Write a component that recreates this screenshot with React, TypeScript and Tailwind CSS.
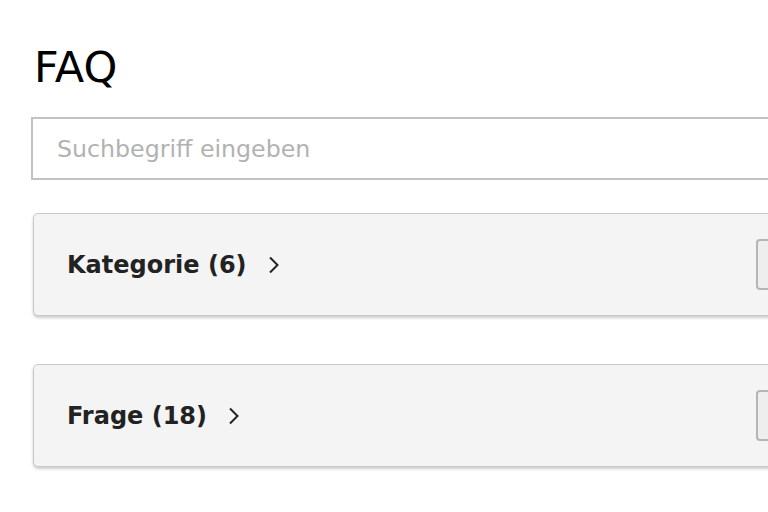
import React from "react";

function Chevron() {
  return (
    <svg width="12" height="18" viewBox="0 0 12 18" fill="none" className="shrink-0">
      <path d="M2 1.5 L9.5 9 L2 16.5" stroke="#222" strokeWidth="2" strokeLinecap="butt" strokeLinejoin="miter" />
    </svg>
  );
}

function Card({ label }: { label: string }) {
  return (
    <div className="ml-[2px] h-[103px] rounded-[5px] border border-[#c9c9c9] bg-[#f4f4f4] shadow-[0_2px_3px_rgba(0,0,0,0.2)] flex items-center pl-[33px] pr-[23px]">
      <div className="flex items-center gap-[21px]">
        <span className="text-[24px] font-bold text-[#222] leading-none">{label}</span>
        <Chevron />
      </div>
      <div className="ml-auto h-[51px] w-[120px] rounded-[4px] border-2 border-[#b5b5b5] bg-[#eeeeee]" />
    </div>
  );
}

export default function App() {
  return (
    <div className="w-[768px] h-[512px] overflow-hidden bg-white" style={{ fontFamily: '"DejaVu Sans", Verdana, sans-serif' }}>
      <div className="w-[900px] pl-[31px] pt-[46px]">
        <h1 className="text-[43px] leading-none text-black mb-[28px] pl-[3px]">FAQ</h1>
        <input
          type="text"
          placeholder="Suchbegriff eingeben"
          className="block w-full h-[63px] border-2 border-[#c2c2c2] bg-white px-[24px] text-[23.7px] text-[#333] placeholder:text-[#b2b2b2] outline-none"
        />
        <div className="mt-[33px] flex flex-col gap-[48px]">
          <Card label="Kategorie (6)" />
          <Card label="Frage (18)" />
        </div>
      </div>
    </div>
  );
}
